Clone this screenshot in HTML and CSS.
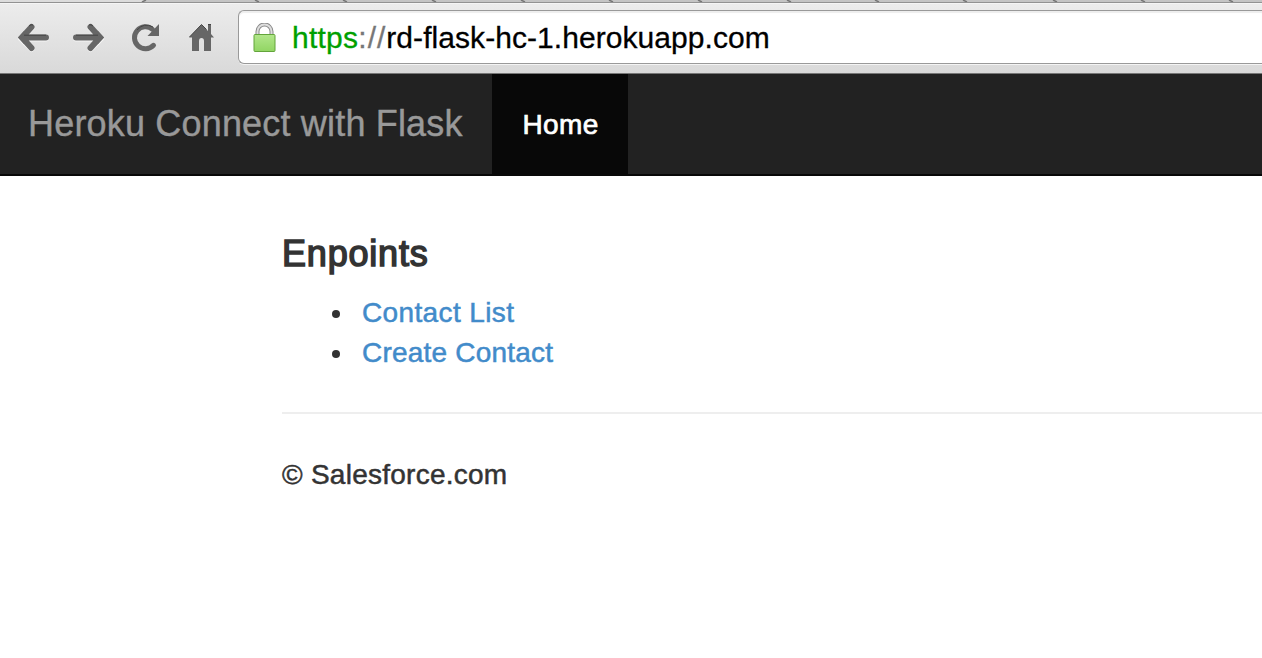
FILE: index.html
```
<!DOCTYPE html>
<html lang="en">
<head>
<meta charset="utf-8">
<title>Heroku Connect with Flask</title>
<link rel="stylesheet" href="styles.css">
</head>
<body>
<div class="tabs">
  <svg width="1262" height="2" viewBox="0 0 1262 2"><path d="M0 0H146L141 2H0Z" fill="#dcdcdc"/><path d="M146 0L142 2M255 0l4 2M343 0l4 2M432 0l4 2M521 0l4 2M609 0l4 2M698 0l4 2M787 0l4 2M875 0l4 2M963 0l4 2M1053 0l4 2M1141 0l4 2M1229 0l4 2" stroke="#777" stroke-width="1.5"/></svg>
</div>
<div class="toolbar">
  <svg class="controls" width="238" height="69" viewBox="0 3 238 69">
    <g fill="none" stroke="#fff" stroke-opacity=".7" stroke-width="6" stroke-linecap="round" stroke-linejoin="round" transform="translate(0 1)"><path d="M46 37.5H22M31.500 27L21 37.500 31.500 48"/><path d="M76 37.500H100M90.500 27L101 37.500 90.500 48"/></g>
    <g fill="none" stroke="#666" stroke-width="6" stroke-linecap="round"><path d="M46 37.500H24M31.500 27L22 37.500 31.500 48"/><path d="M76 37.500H98M90.500 27L100 37.500 90.500 48"/></g>
    <g fill="#666"><path d="M18 37.500L24 31v13zM104 37.500L98 31v13z"/></g>
    <path d="M153.500 45.300A11 11 0 1 1 152.500 29.300" fill="none" stroke="#666" stroke-width="5" stroke-linecap="round"/>
    <path d="M159 24V36H147.500z" fill="#666"/>
    <path d="M201.500 24.500L189 37.500h3V51h7V41q0-3 2.500-3t2.500 3V51h7V37.500h3L211 34V24h-3v7z" fill="#666"/>
    <g fill="none" stroke="#444"><path d="M29 26q2-2 4-1M24 35.200H46M76 35.200H98M89 25q2-1 4 1M137 30q7-8 16-3M189.500 37l12-12.500 5 5M208 24.500h3"/></g>
  </svg>
  <div class="address">
    <svg class="lock" width="24" height="32" viewBox="0 0 24 32">
      <path d="M4.500 14V8.500a7 7 0 0 1 14 0V14" fill="none" stroke="#888" stroke-width="4"/>
      <path d="M4.500 14V8.500a7 7 0 0 1 14 0V14" fill="none" stroke="#ddd" stroke-width="2"/>
      <defs><linearGradient id="g" x2="0" y2="1"><stop stop-color="#b2e68b"/><stop offset="1" stop-color="#91d563"/></linearGradient></defs>
      <rect x="1" y="11.500" width="21" height="17" rx="1" fill="url(#g)" stroke="#63a43b"/>
    </svg>
    <span class="url"><span class="scheme">https</span><span class="slashes">://</span>rd-flask-hc-1.herokuapp.com</span>
  </div>
</div>
<nav class="navbar">
  <a class="brand">Heroku Connect with Flask</a>
  <a class="home"><span class="home-label">Home</span></a>
</nav>
<main class="content">
  <h4 class="heading"><span class="heading-text">Enpoints</span></h4>
  <ul class="links">
    <li><a class="contact-list">Contact List</a></li>
    <li><a class="create-contact">Create Contact</a></li>
  </ul>
  <footer class="footer"><span class="copyright">© Salesforce.com</span></footer>
</main>
</body>
</html>
```
FILE: styles.css
```
* { box-sizing: border-box; }
body { margin: 0; height: 658px; overflow: hidden; background: #fff; color: #333; font: 28px/40px "Liberation Sans", Arial, sans-serif; }
svg { display: block; }
.tabs { height: 3px; background: #c4c4c4; border-bottom: 1px solid #929292; }
.toolbar { height: 71px; display: flex; align-items: flex-start; background: linear-gradient(#ececec, #d9d9d9); border-top: 1px solid #f5f5f5; border-bottom: 1px solid #777; }
.controls { flex: none; margin-top: -1px; }
.address { flex: 1; display: flex; height: 54px; margin-top: 6px; padding-left: 14px; background: #fff; border: 1px solid #999; border-right: 0; border-radius: 6px 0 0 6px; box-shadow: inset 0 2px 1px #eee, 0 1px 0 #f4f4f4; }
.lock { flex: none; margin-top: 12px; }
.url { margin: 7px 0 0 15px; color: #000; white-space: nowrap; font-size: 30px; letter-spacing: .06px; -webkit-text-stroke: .3px; }
.scheme { color: #00a000; letter-spacing: .25px; }
.slashes { color: #777; letter-spacing: 1px; }
.navbar { display: flex; height: 102px; background: #222; border-bottom: 2px solid #080808; line-height: 100px; white-space: nowrap; }
.brand { width: 492px; padding-left: 28px; color: #999; font-size: 36px; letter-spacing: .18px; -webkit-text-stroke: .4px; }
.home { width: 136px; padding: 1px 0 0 30.500px; background: #080808; color: #fff; letter-spacing: .35px; height: 100px; -webkit-text-stroke: .7px; }
.content { padding: 58px 0 0 282px; -webkit-text-stroke: .5px; }
.heading { margin: 0 0 19px; font-size: 36px; line-height: 40px; font-weight: 400; letter-spacing: .8px; -webkit-text-stroke: 1.5px; }
.links { margin: 0; padding: 0 0 0 73px; color: #333; }
.links a { padding-left: 7px; color: #428bca; }
.contact-list { letter-spacing: .37px; }
.create-contact { letter-spacing: .2px; }
.footer { margin-top: 39px; padding-top: 41px; border-top: 2px solid #eee; letter-spacing: .25px; }
```
